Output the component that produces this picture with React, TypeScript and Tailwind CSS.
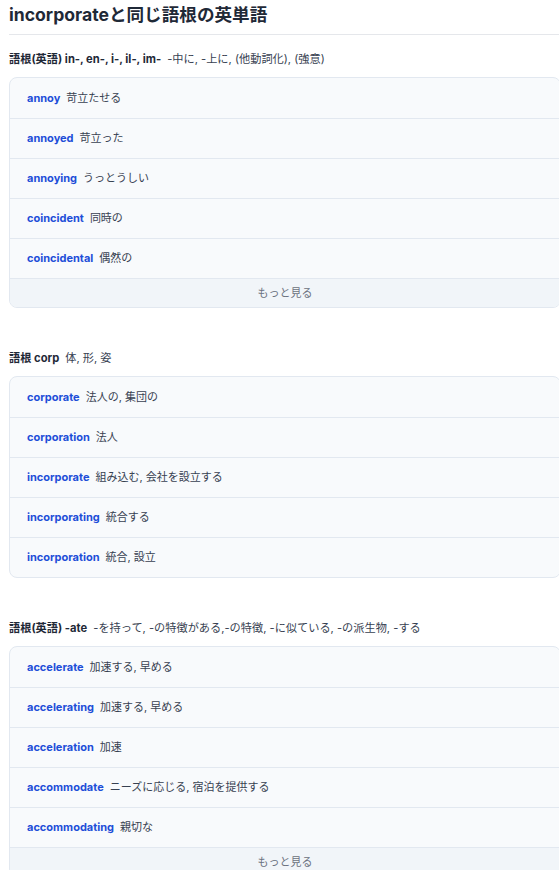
import React from 'react';

interface Word {
  word: string;
  meaning: string;
}

interface RootGroup {
  label: string;
  root: string;
  meaning: string;
  words: Word[];
  more: boolean;
}

const groups: RootGroup[] = [
  {
    label: '語根(英語)',
    root: 'in-, en-, i-, il-, im-',
    meaning: '-中に, -上に, (他動詞化), (強意)',
    more: true,
    words: [
      { word: 'annoy', meaning: '苛立たせる' },
      { word: 'annoyed', meaning: '苛立った' },
      { word: 'annoying', meaning: 'うっとうしい' },
      { word: 'coincident', meaning: '同時の' },
      { word: 'coincidental', meaning: '偶然の' },
    ],
  },
  {
    label: '語根',
    root: 'corp',
    meaning: '体, 形, 姿',
    more: false,
    words: [
      { word: 'corporate', meaning: '法人の, 集団の' },
      { word: 'corporation', meaning: '法人' },
      { word: 'incorporate', meaning: '組み込む, 会社を設立する' },
      { word: 'incorporating', meaning: '統合する' },
      { word: 'incorporation', meaning: '統合, 設立' },
    ],
  },
  {
    label: '語根(英語)',
    root: '-ate',
    meaning: '-を持って, -の特徴がある,-の特徴, -に似ている, -の派生物, -する',
    more: true,
    words: [
      { word: 'accelerate', meaning: '加速する, 早める' },
      { word: 'accelerating', meaning: '加速する, 早める' },
      { word: 'acceleration', meaning: '加速' },
      { word: 'accommodate', meaning: 'ニーズに応じる, 宿泊を提供する' },
      { word: 'accommodating', meaning: '親切な' },
    ],
  },
];

export default function App() {
  return (
    <div
      className="w-[559px] h-[870px] overflow-hidden bg-white pl-[9px]"
      style={{ fontFamily: 'Inter, "Noto Sans CJK JP", sans-serif' }}
    >
      <h1 className="pt-[3px] pb-[8px] text-[17.6px] leading-[23px] font-bold text-[#1f2937] border-b border-[#e5e7eb]">
        incorporateと同じ語根の英単語
      </h1>

      {groups.map((g, i) => (
        <div key={i} className="pt-[16px] pb-[26px]">
          <div className="flex items-center text-[11.2px] leading-[16px] text-[#1f2937] mb-[10px]">
            <span className="font-bold">{g.label} {g.root}</span>
            <span className="ml-[6px] text-[#374151]">{g.meaning}</span>
          </div>
          <div className="w-[552px] rounded-[8px] border border-[#e2e8f0] overflow-hidden bg-[#f8fafc]">
            {g.words.map((w, j) => (
              <div
                key={w.word}
                className={`flex items-center h-[40px] px-[17px] text-[11px] ${j > 0 ? 'border-t border-[#e2e8f0]' : ''}`}
              >
                <span className="font-bold text-[#1d4ed8]">{w.word}</span>
                <span className="ml-[6px] text-[#374151]">{w.meaning}</span>
              </div>
            ))}
            {g.more && (
              <div className="h-[29px] flex items-center justify-center border-t border-[#e2e8f0] bg-[#f1f5f9] text-[11px] text-[#6b7280]">
                もっと見る
              </div>
            )}
          </div>
        </div>
      ))}
    </div>
  );
}
